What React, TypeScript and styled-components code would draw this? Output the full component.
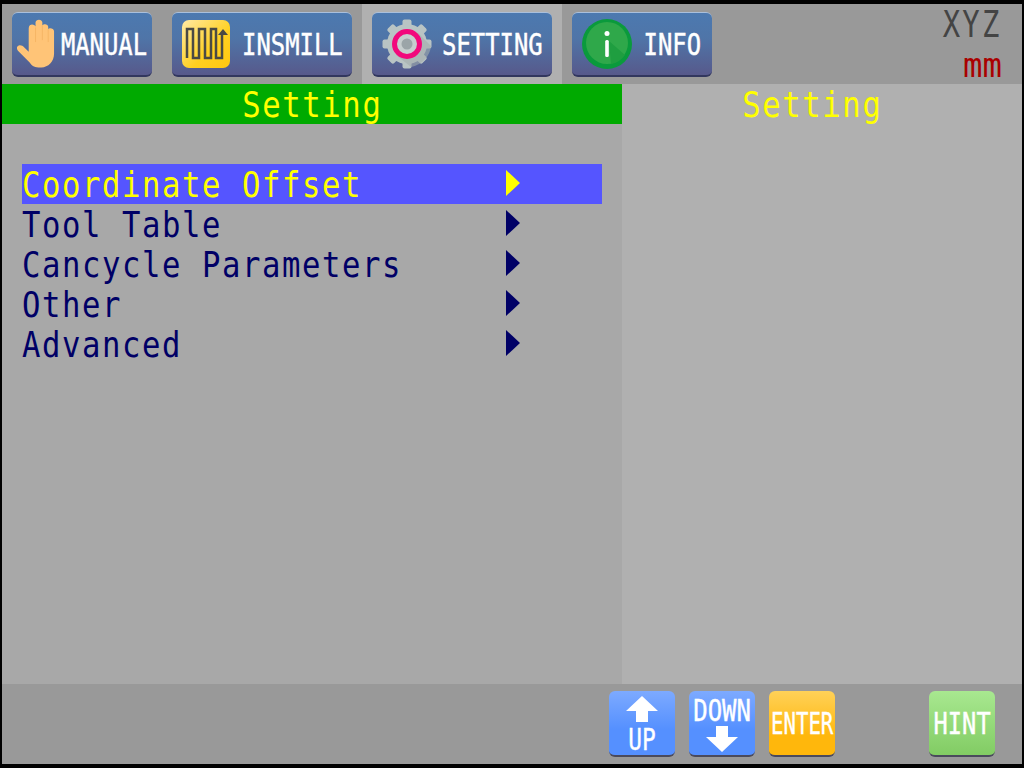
import React from 'react'
import styled, { createGlobalStyle } from 'styled-components'

const GlobalStyle = createGlobalStyle`
  html, body {
    margin: 0;
    padding: 0;
    background: #000;
  }
`

const MONO = `"DejaVu Sans Mono", "Liberation Mono", monospace`

const HandIcon = () => (
  <svg width="40" height="50" viewBox="0 0 40 50">
    <path
      d="M12 9c0-3 2-4 3.500-4 1.500 0 3 1 3.500 2V3c0-4 7-4 7 0v3c1-2 6-2 6 1.500V10c1-2 6-1 6 2v23c0 8-6 14-13 14h-3c-5 0-7-2-9-5L1 32c-2-3-1-5 1-5.500 2-.5 4 .5 5.500 2L12 33z"
      fill="#ffc477"
    />
    <path d="M19 8v15M26 6v15M32 10v13" stroke="#f6b565" strokeWidth="1" fill="none" />
  </svg>
)

const MillIcon = () => (
  <svg width="48" height="48" viewBox="0 0 48 48">
    <defs>
      <linearGradient id="mill" x1="0" y1="0" x2="1" y2="1">
        <stop offset="0" stopColor="#ffeaa6" />
        <stop offset="0.6" stopColor="#ffd020" />
        <stop offset="1" stopColor="#ffc810" />
      </linearGradient>
    </defs>
    <rect width="48" height="48" rx="7" fill="url(#mill)" />
    <path
      d="M5 38V9h6v29h6V9h6v29h6V9h5v29h6V14"
      fill="none"
      stroke="#4a4a44"
      strokeWidth="2.500"
    />
    <path d="M36 15l5-6 5 6z" fill="#4a4a44" />
  </svg>
)

const GearIcon = () => (
  <svg width="50" height="50" viewBox="0 0 50 50">
    <g fill="#b9c4c4">
      <circle cx="25" cy="25" r="20" />
      {[0, 45, 90, 135, 180, 225, 270, 315].map((a) => (
        <rect key={a} x="20.500" y="0.500" width="9" height="9" rx="2" transform={`rotate(${a} 25 25)`} />
      ))}
    </g>
    <path d="M36 14l13 13a24 24 0 0 1-20 21L14 36z" fill="#a4aeae" opacity="0.6" />
    <circle cx="25" cy="25" r="12.500" fill="#c6cece" stroke="#f2087c" strokeWidth="5" />
    <circle cx="25" cy="25" r="5.500" fill="#9ba5a8" />
  </svg>
)

const InfoIcon = () => (
  <svg width="50" height="50" viewBox="0 0 50 50">
    <circle cx="25" cy="25" r="25" fill="#0a9a3c" />
    <circle cx="25" cy="24" r="21" fill="#2fa84a" />
    <path d="M27 22l16 14a21 21 0 0 1-14 9z" fill="#1f9e40" />
    <circle cx="25" cy="14.500" r="2.500" fill="#fff" />
    <rect x="23.200" y="21" width="3.600" height="17" rx="1.500" fill="#fff" />
  </svg>
)

const ArrowGlyph = ({ down }: { down?: boolean }) => (
  <svg width="32" height="26" viewBox="0 0 32 26">
    <path d={down ? 'M10 0h12v11h10L16 26 0 11h10z' : 'M16 0l16 15H22v11H10V15H0z'} fill="#fff" />
  </svg>
)

const tabs = [
  { label: 'MANUAL', width: 140, iconWidth: 44, icon: <HandIcon /> },
  { label: 'INSMILL', width: 180, iconWidth: 60, icon: <MillIcon /> },
  { label: 'SETTING', width: 180, iconWidth: 60, icon: <GearIcon />, active: true },
  { label: 'INFO', width: 140, iconWidth: 60, icon: <InfoIcon /> },
]

const menu = ['Coordinate Offset', 'Tool Table', 'Cancycle Parameters', 'Other', 'Advanced']

const App: React.FC = () => {
  return (
    <Screen>
      <GlobalStyle />
      <TopBar>
        {tabs.map((t) => (
          <TabSlot key={t.label} $active={t.active}>
            <TabButton $width={t.width}>
              <TabIcon $width={t.iconWidth}>{t.icon}</TabIcon>
              <TabLabel>
                <span>{t.label}</span>
              </TabLabel>
            </TabButton>
          </TabSlot>
        ))}
        <Status>
          <Axes>XYZ</Axes>
          <Unit>mm</Unit>
        </Status>
      </TopBar>
      <Main>
        <LeftPanel>
          <Header>
            <Title>Setting</Title>
          </Header>
          <Menu>
            {menu.map((m, i) => (
              <MenuRow key={m} $selected={i === 0}>
                <MenuText>{m}</MenuText>
                <MenuArrow $selected={i === 0} />
              </MenuRow>
            ))}
          </Menu>
        </LeftPanel>
        <RightPanel>
          <SideHeader>
            <Title>Setting</Title>
          </SideHeader>
        </RightPanel>
      </Main>
      <BottomBar>
        <KeyButton $variant="blue">
          <ArrowGlyph />
          <UpText $squeeze={0.76}>UP</UpText>
        </KeyButton>
        <KeyButton $variant="blue">
          <KeyText $squeeze={0.8}>DOWN</KeyText>
          <ArrowGlyph down />
        </KeyButton>
        <KeyButton $variant="orange">
          <KeyText $squeeze={0.69}>ENTER</KeyText>
        </KeyButton>
        <KeySpacer />
        <KeyButton $variant="green">
          <KeyText $squeeze={0.79}>HINT</KeyText>
        </KeyButton>
      </BottomBar>
    </Screen>
  )
}

const Screen = styled.div`
  width: 1020px;
  height: 760px;
  padding: 4px 2px;
  display: flex;
  flex-direction: column;
  background: #000;
  overflow: hidden;
`

const TopBar = styled.div`
  height: 80px;
  display: flex;
  background: #999;
`

const TabSlot = styled.div<{ $active?: boolean }>`
  padding: 8px 10px 0;
  background: ${(p) => (p.$active ? '#b0b0b0' : 'transparent')};
`

const TabButton = styled.div<{ $width: number }>`
  width: ${(p) => p.$width}px;
  height: 65px;
  box-sizing: border-box;
  display: flex;
  align-items: center;
  border-radius: 6px;
  border-top: 1px solid #a9bfdc;
  border-bottom: 2px solid #32375e;
  background: linear-gradient(#4c79b0, #4f75a8 40%, #57598b);
`

const TabIcon = styled.div<{ $width: number }>`
  width: ${(p) => p.$width}px;
  flex: none;
  box-sizing: border-box;
  padding-left: ${(p) => (p.$width > 44 ? 10 : 5)}px;
  display: flex;
  align-items: center;
`

const TabLabel = styled.div`
  flex: 1;
  min-width: 0;
  display: flex;
  justify-content: center;
  font: 31px ${MONO};
  color: #fff;
  white-space: nowrap;
  -webkit-text-stroke: 0.5px #fff;

  span {
    display: inline-block;
    transform: scaleX(0.77);
  }
`

const Status = styled.div`
  margin-left: auto;
  padding-right: 20px;
  display: flex;
  flex-direction: column;
  align-items: flex-end;
  font-family: ${MONO};
  white-space: nowrap;
`

const Axes = styled.div`
  font-size: 38px;
  line-height: 40px;
  color: #444;
  letter-spacing: 3px;
  transform: scaleX(0.76);
  transform-origin: right;
`

const Unit = styled.div`
  font-size: 34px;
  line-height: 38px;
  margin-top: 2px;
  color: #aa0000;
  transform: scaleX(0.95);
  transform-origin: right;
`

const Main = styled.div`
  flex: 1;
  display: flex;
  min-height: 0;
`

const LeftPanel = styled.div`
  width: 620px;
  background: #a8a8a8;
`

const RightPanel = styled.div`
  flex: 1;
  background: #b0b0b0;
`

const Header = styled.div`
  height: 40px;
  display: flex;
  justify-content: center;
  align-items: center;
  background: #00aa00;
`

const SideHeader = styled(Header)`
  padding-right: 20px;
  background: transparent;
`

const Title = styled.div`
  margin-top: 2px;
  font: 36px/40px ${MONO};
  color: #ff0;
  letter-spacing: 1.86px;
  transform: scaleX(0.85);
`

const Menu = styled.div`
  padding: 40px 20px 0;
`

const MenuRow = styled.div<{ $selected?: boolean }>`
  height: 40px;
  display: flex;
  align-items: center;
  position: relative;
  background: ${(p) => (p.$selected ? '#5555ff' : 'transparent')};
  color: ${(p) => (p.$selected ? '#ff0' : '#000066')};
`

const MenuText = styled.div`
  margin-top: 2px;
  font: 36px/40px ${MONO};
  letter-spacing: 1.86px;
  white-space: pre;
  transform: scaleX(0.85);
  transform-origin: left;
`

const MenuArrow = styled.div<{ $selected?: boolean }>`
  position: absolute;
  left: 484px;
  top: 6px;
  width: 0;
  height: 0;
  border-left: 14px solid ${(p) => (p.$selected ? '#ff0' : '#000066')};
  border-top: 13px solid transparent;
  border-bottom: 13px solid transparent;
`

const BottomBar = styled.div`
  height: 80px;
  box-sizing: border-box;
  padding: 7px 0 0 607px;
  display: flex;
  gap: 14px;
  background: #999;
`

const keyColors = {
  blue: 'linear-gradient(#7daaff, #5590ff 60%)',
  orange: 'linear-gradient(#ffd158, #ffb70c 70%)',
  green: 'linear-gradient(#a8e890, #82cc64)',
}

const KeyButton = styled.div<{ $variant: keyof typeof keyColors }>`
  width: 66px;
  height: 66px;
  box-sizing: border-box;
  padding-top: 2px;
  display: flex;
  flex-direction: column;
  align-items: center;
  justify-content: center;
  border-radius: 6px;
  border-bottom: 2px solid #4a4a5c;
  background: ${(p) => keyColors[p.$variant]};
`

const KeySpacer = styled.div`
  width: 66px;
`

const KeyText = styled.div<{ $squeeze: number }>`
  font: 30px/30px ${MONO};
  color: #fff;
  white-space: nowrap;
  -webkit-text-stroke: 0.4px #fff;
  transform: scaleX(${(p) => p.$squeeze});
`

const UpText = styled(KeyText)`
  margin: 3px 0 -3px;
`

export default App
